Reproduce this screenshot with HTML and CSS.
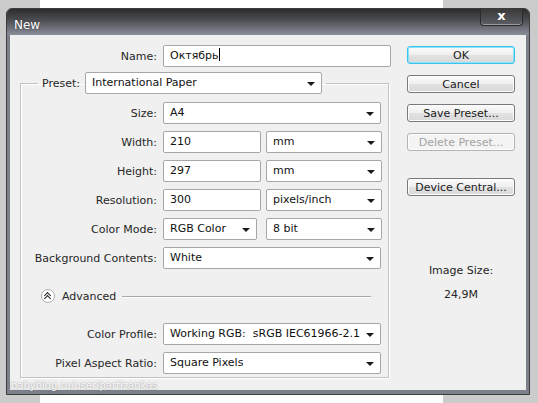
FILE: index.html
```html
<!DOCTYPE html>
<html lang="en">
<head>
    <meta charset="UTF-8">
    <title>New</title>
    <link rel="stylesheet" href="styles.css">
</head>
<body>
    <div class="window">
        <div class="titlebar">
            <span class="title">New</span>
            <span class="close">x</span>
        </div>
        <div class="client">
            <div class="form">
                <div class="row name-row">
                    <label class="lbl">Name:</label>
                    <div class="field name-field">Октябрь<span class="caret"></span></div>
                </div>
                <fieldset class="group">
                    <legend class="preset">
                        <label>Preset:</label>
                        <div class="field select preset-select">International Paper</div>
                    </legend>
                    <div class="rows">
                        <div class="row">
                            <label class="lbl">Size:</label>
                            <div class="field select wide">A4</div>
                        </div>
                        <div class="row">
                            <label class="lbl">Width:</label>
                            <div class="field num">210</div>
                            <div class="field select unit">mm</div>
                        </div>
                        <div class="row">
                            <label class="lbl">Height:</label>
                            <div class="field num">297</div>
                            <div class="field select unit">mm</div>
                        </div>
                        <div class="row">
                            <label class="lbl">Resolution:</label>
                            <div class="field num">300</div>
                            <div class="field select unit">pixels/inch</div>
                        </div>
                        <div class="row">
                            <label class="lbl">Color Mode:</label>
                            <div class="field select mode">RGB Color</div>
                            <div class="field select unit">8 bit</div>
                        </div>
                        <div class="row">
                            <label class="lbl">Background Contents:</label>
                            <div class="field select wide">White</div>
                        </div>
                    </div>
                    <div class="advanced">
                        <span class="toggle"></span>
                        <span class="adv-text">Advanced</span>
                        <span class="adv-line"></span>
                    </div>
                    <div class="rows">
                        <div class="row">
                            <label class="lbl">Color Profile:</label>
                            <div class="field select wide">Working RGB:&nbsp; sRGB IEC61966-2.1</div>
                        </div>
                        <div class="row">
                            <label class="lbl">Pixel Aspect Ratio:</label>
                            <div class="field select wide">Square Pixels</div>
                        </div>
                    </div>
                </fieldset>
            </div>
            <div class="side">
                <button class="btn default">OK</button>
                <button class="btn">Cancel</button>
                <button class="btn">Save Preset...</button>
                <button class="btn" disabled>Delete Preset...</button>
                <button class="btn central">Device Central...</button>
                <div class="image-size">
                    <div>Image Size:</div>
                    <div class="size-value">24,9M</div>
                </div>
            </div>
        </div>
        <div class="watermark">babyblog.ru/user/partizankas</div>
    </div>
</body>
</html>
```

FILE: styles.css
```css
* {
    box-sizing: border-box;
}
body {
    margin: 0;
    height: 403px;
    overflow: hidden;
    font-family: "DejaVu Sans", Verdana, sans-serif;
    font-size: 11px;
    color: #262626;
    background: linear-gradient(90deg, #cbcbcb 40px, #ffffff 40px, #ffffff 443px, #cbcbcb 443px);
    padding: 8px 0 0 6px;
}
.window {
    position: relative;
    width: 524px;
    height: 387px;
    border: 1px solid #3c3c3c;
    border-radius: 6px 6px 0 0;
    background: #7c808b;
    padding: 0 3px 4px;
    display: flex;
    flex-direction: column;
}
.titlebar {
    height: 26px;
    margin: 0 -3px;
    border-radius: 5px 5px 0 0;
    background: linear-gradient(#2c2c2c, #4a4b50 40%, #8a8e9a);
    display: flex;
    justify-content: space-between;
    align-items: flex-start;
    padding-left: 7px;
}
.title {
    color: #ffffff;
    font-size: 12px;
    margin-top: 9px;
    text-shadow: 0 0 2px #2a2a2a;
}
.close {
    width: 43px;
    height: 17px;
    margin-right: 6px;
    border: 1px solid #2a2a2a;
    border-top: none;
    border-radius: 0 0 4px 4px;
    background: linear-gradient(#3a3a3a, #5c5e64);
    box-shadow: inset 0 -1px 0 #9a9ca3;
    color: #ffffff;
    font-weight: bold;
    font-size: 13px;
    text-align: center;
    line-height: 14px;
}
.client {
    flex: 1;
    background: #f0f0f0;
    display: flex;
    padding-top: 10px;
}
.form {
    width: 385px;
    padding-left: 10px;
}
.row {
    display: flex;
    align-items: center;
    height: 22px;
}
.lbl {
    width: 136px;
    margin-right: 6px;
    text-align: right;
    white-space: nowrap;
}
.name-row .lbl {
    width: 137px;
}
.field {
    height: 22px;
    line-height: 20px;
    border: 1px solid #a7a7a7;
    border-radius: 2px;
    background: #ffffff;
    padding-left: 6px;
    color: #111111;
    white-space: nowrap;
    overflow: hidden;
}
.name-field {
    width: 228px;
}
.caret {
    display: inline-block;
    width: 1px;
    height: 13px;
    background: #000000;
    vertical-align: -2px;
}
.select {
    position: relative;
    padding-right: 18px;
}
.select::after {
    content: "";
    position: absolute;
    right: 6px;
    top: 9px;
    border-left: 4px solid transparent;
    border-right: 4px solid transparent;
    border-top: 4px solid #1a1a1a;
}
.wide {
    width: 218px;
}
.num {
    width: 98px;
    margin-right: 5px;
}
.mode {
    width: 94px;
    margin-right: 9px;
}
.unit {
    width: 116px;
}
.group {
    margin: 5px 0 0;
    width: 369px;
    padding: 0 0 3px;
    border: 1px solid #c2c2c2;
    box-shadow: inset 1px 1px 0 #ffffff, 1px 1px 0 #ffffff;
}
.preset {
    margin-left: 17px;
    padding: 0 4px;
    display: flex;
    align-items: center;
}
.preset label {
    margin-right: 5px;
}
.preset-select {
    width: 237px;
}
.rows {
    display: flex;
    flex-direction: column;
    gap: 7px;
    margin-top: 8px;
}
.advanced {
    display: flex;
    align-items: center;
    height: 14px;
    margin-top: 20px;
    margin-bottom: 20px;
    padding-left: 20px;
    padding-right: 17px;
}
.toggle {
    position: relative;
    width: 14px;
    height: 14px;
    border: 1px solid #b0b0b0;
    border-radius: 50%;
    background: #ffffff;
    margin-right: 7px;
}
.toggle::before,
.toggle::after {
    content: "";
    position: absolute;
    left: 3px;
    width: 4px;
    height: 4px;
    border-left: 1.5px solid #222222;
    border-top: 1.5px solid #222222;
    transform: rotate(45deg);
}
.toggle::before {
    top: 3px;
}
.toggle::after {
    top: 6px;
}
.adv-text {
    margin-right: 6px;
}
.adv-line {
    flex: 1;
    height: 1px;
    background: #a8a8a8;
    box-shadow: 0 1px 0 #ffffff;
}
.side {
    width: 108px;
    margin-left: 12px;
    display: flex;
    flex-direction: column;
    gap: 11px;
    padding-top: 1px;
}
.btn {
    height: 18px;
    padding: 0;
    font-family: inherit;
    font-size: 11px;
    color: #1a1a1a;
    border: 1px solid #7a7a7a;
    border-radius: 3px;
    background: linear-gradient(#fbfbfb, #efefef 50%, #e2e2e2 51%, #d9d9d9);
    box-shadow: inset 0 0 0 1px #fdfdfd;
}
.btn.default {
    border: 1px solid #39c4ee;
    box-shadow: inset 0 0 0 1px #8ee0f8;
}
.btn:disabled {
    color: #a3a3a3;
    border-color: #b3b3b3;
    background: #f4f4f4;
}
.btn.central {
    margin-top: 16px;
}
.image-size {
    margin-top: 57px;
    text-align: center;
    line-height: 14px;
}
.size-value {
    margin-top: 10px;
}
.watermark {
    position: absolute;
    left: 4px;
    bottom: 3px;
    font-size: 10px;
    color: rgba(255, 255, 255, 0.95);
    text-shadow: 0 0 2px rgba(0, 0, 0, 0.45);
}
```
